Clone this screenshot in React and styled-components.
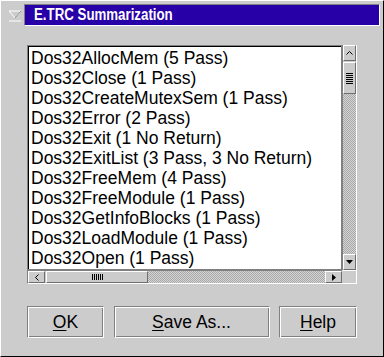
import React from 'react'
import styled, { createGlobalStyle } from 'styled-components'

const GlobalStyle = createGlobalStyle`
  html, body { margin: 0; padding: 0; background: #cccccc; }
  * { box-sizing: border-box; }
`

const items = [
  'Dos32AllocMem (5 Pass)',
  'Dos32Close (1 Pass)',
  'Dos32CreateMutexSem (1 Pass)',
  'Dos32Error (2 Pass)',
  'Dos32Exit (1 No Return)',
  'Dos32ExitList (3 Pass, 3 No Return)',
  'Dos32FreeMem (4 Pass)',
  'Dos32FreeModule (1 Pass)',
  'Dos32GetInfoBlocks (1 Pass)',
  'Dos32LoadModule (1 Pass)',
  'Dos32Open (1 Pass)',
]

const App = () => {
  return (
    <>
      <GlobalStyle />
      <Frame>
        <TitleRow>
          <SysMenu>
            <svg width="14" height="12" viewBox="0 0 14 12">
              <polygon points="1,1 13,1 7,8" fill="none" stroke="#ffffff" strokeWidth="1" />
              <polyline points="7,8 13,1" fill="none" stroke="#8c8c8c" strokeWidth="1" />
              <line x1="1" y1="11" x2="13" y2="11" stroke="#ffffff" strokeWidth="1" />
            </svg>
          </SysMenu>
          <TitleBar>
            <TitleText>E.TRC Summarization</TitleText>
          </TitleBar>
        </TitleRow>

        <Content>
          <ListGrid>
            <ListBox>
              {items.map((t) => (
                <Item key={t}>{t}</Item>
              ))}
            </ListBox>

            <VScroll>
              <ArrowBtn>
                <svg width="7" height="4" viewBox="0 0 7 4">
                  <polyline points="0.5,3.5 3.5,0.5 6.5,3.5" fill="none" stroke="#000" strokeWidth="1" />
                </svg>
              </ArrowBtn>
              <VThumb>
                {[0, 1, 2, 3, 4, 5].map((i) => <GripH key={i} />)}
              </VThumb>
              <Track />
              <ArrowBtn>
                <svg width="7" height="4" viewBox="0 0 7 4">
                  <polygon points="0,0 7,0 3.5,4" fill="#000" />
                </svg>
              </ArrowBtn>
            </VScroll>

            <HScroll>
              <ArrowBtn $wide>
                <svg width="4" height="7" viewBox="0 0 4 7">
                  <polyline points="3.5,0.5 0.5,3.5 3.5,6.5" fill="none" stroke="#000" strokeWidth="1" />
                </svg>
              </ArrowBtn>
              <HThumb>
                {[0, 1, 2, 3, 4, 5].map((i) => <GripV key={i} />)}
              </HThumb>
              <Track />
              <ArrowBtn $wide>
                <svg width="4" height="7" viewBox="0 0 4 7">
                  <polygon points="0,0 4,3.5 0,7" fill="#000" />
                </svg>
              </ArrowBtn>
            </HScroll>

            <Corner />
          </ListGrid>

          <ButtonRow>
            <Button $w={77}><u>O</u>K</Button>
            <Button $w={156}><u>S</u>ave As...</Button>
            <Button $w={78}><u>H</u>elp</Button>
          </ButtonRow>
        </Content>
      </Frame>
    </>
  )
}

export default App

const Frame = styled.div`
  width: 384px;
  height: 357px;
  background: #cccccc;
  border: 1px solid;
  border-color: #ffffff #000000 #000000 #ffffff;
  font-family: "Liberation Sans", Arial, sans-serif;
  overflow: hidden;
`

const TitleRow = styled.div`
  display: flex;
  gap: 2px;
  height: 22px;
  margin: 3px 3px 0 3px;
`

const SysMenu = styled.div`
  width: 18px;
  display: flex;
  align-items: center;
  justify-content: center;
  padding: 1px 0 0 4px;
`

const TitleBar = styled.div`
  flex: 1;
  background: #2800a8;
  border: 1px solid;
  border-color: #808080 #ffffff #ffffff #808080;
  color: #ffffff;
  font-weight: 700;
  font-size: 16px;
  line-height: 19px;
  padding-left: 9px;
  white-space: nowrap;
`

const TitleText = styled.span`
  display: inline-block;
  transform: scaleX(0.83);
  transform-origin: left center;
`

const Content = styled.div`
  padding: 19px 26px 0 26px;
`

const ListGrid = styled.div`
  display: grid;
  grid-template-columns: 1fr 15px;
  grid-template-rows: 225px 14px;
`

const ListBox = styled.div`
  background: #ffffff;
  border-top: 2px solid #000;
  border-left: 2px solid #000;
  outline: 1px solid #808080;
  outline-offset: -1px;
  padding: 1px 0 0 2px;
  overflow: hidden;
  color: #000;
`

const Item = styled.div`
  font-size: 17.5px;
  line-height: 20px;
  white-space: nowrap;
`

const bevel = `
  background: #cccccc;
  border: 1px solid;
  border-color: #ffffff #6e6e6e #6e6e6e #ffffff;
`

const VScroll = styled.div`
  display: flex;
  flex-direction: column;
  border-left: 1px solid #808080;
  border-right: 1px solid #ffffff;
`

const HScroll = styled.div`
  display: flex;
  border-top: 1px solid #808080;
  border-left: 1px solid #808080;
  border-bottom: 1px solid #ffffff;
`

const ArrowBtn = styled.div`
  ${bevel}
  flex: 0 0 ${(p) => (p.$wide ? '17px' : '16px')};
  display: flex;
  align-items: center;
  justify-content: center;
`

const Track = styled.div`
  flex: 1;
  background: repeating-conic-gradient(#a8a8a8 0 25%, #d4d4d4 0 50%) 0 0 / 2px 2px;
`

const VThumb = styled.div`
  ${bevel}
  flex: 0 0 32px;
  margin-top: 1px;
  display: flex;
  flex-direction: column;
  align-items: center;
  justify-content: center;
  gap: 1px;
`

const GripH = styled.div`
  width: 7px;
  height: 1px;
  background: #000;
`

const HThumb = styled.div`
  ${bevel}
  flex: 0 0 102px;
  margin-left: 1px;
  display: flex;
  align-items: center;
  justify-content: center;
  gap: 1px;
`

const GripV = styled.div`
  width: 1px;
  height: 6px;
  background: #000;
`

const Corner = styled.div`
  background: #cccccc;
  border: 1px solid #ffffff;
  border-left-color: #cccccc;
`

const ButtonRow = styled.div`
  display: flex;
  justify-content: space-between;
  margin-top: 22px;
`

const Button = styled.div`
  width: ${(p) => p.$w}px;
  height: 32px;
  border: 1px solid;
  border-color: #808080 #ffffff #ffffff #808080;
  box-shadow: inset 1px 1px 0 #ffffff, inset -1px -1px 0 #808080;
  background: #cccccc;
  display: flex;
  align-items: center;
  justify-content: center;
  font-size: 17.5px;
  color: #000;
  u { text-underline-offset: 2px; }
`
